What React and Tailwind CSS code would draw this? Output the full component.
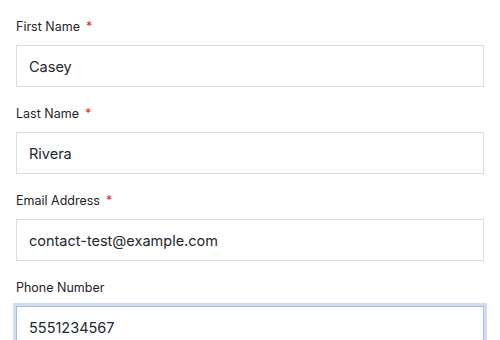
import React from 'react';

const fields = [
    { id: 'first', label: 'First Name', value: 'Casey', required: true },
    { id: 'last', label: 'Last Name', value: 'Rivera', required: true },
    { id: 'email', label: 'Email Address', value: 'contact-test@example.com', required: true },
    { id: 'phone', label: 'Phone Number', value: '5551234567', focused: true },
];

const Field = ({ id, label, value, required, focused }) => (
    <div className="flex flex-col">
        <label htmlFor={id} className="text-[12.5px] leading-5 font-normal text-[#1f232b] mb-2">
            {label}
            {required && <span className="text-[#e02424] ml-[6px]">*</span>}
        </label>
        <input
            id={id}
            type="text"
            defaultValue={value}
            className={`h-[42px] w-full px-3 bg-white text-[14.5px] text-[#24272e] outline-none border ${focused
                ? 'border-[#a6bcd9] ring-[3px] ring-[#d0ddef]'
                : 'border-[#dcdcdc]'
                }`}
        />
    </div>
);

export default function App() {
    return (
        <div className="w-[500px] h-[340px] overflow-hidden bg-white px-4 pt-[17px] font-['Inter',sans-serif]">
            <div className="flex flex-col gap-[17px]">
                {fields.map((f) => (
                    <Field key={f.id} {...f} />
                ))}
            </div>
        </div>
    );
}
